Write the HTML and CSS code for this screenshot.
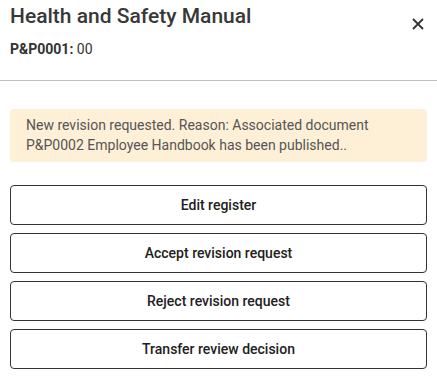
FILE: index.html
```html
<!DOCTYPE html>
<html lang="en">
<head>
<meta charset="utf-8">
<title>Health and Safety Manual</title>
<link rel="stylesheet" href="styles.css">
</head>
<body>
<div class="panel">
  <header class="header">
    <div class="titles">
      <h1 class="title">Health and Safety Manual</h1>
      <div class="subtitle"><strong>P&amp;P0001:</strong> 00</div>
    </div>
    <button class="close" aria-label="Close">
      <svg width="12" height="12" viewBox="0 0 12 12"><path d="M1 1L11 11M11 1L1 11" stroke="#333" stroke-width="1.8" fill="none"/></svg>
    </button>
  </header>
  <div class="content">
    <div class="alert">New revision requested. Reason: Associated document P&amp;P0002 Employee Handbook has been published..</div>
    <div class="actions">
      <button class="btn">Edit register</button>
      <button class="btn">Accept revision request</button>
      <button class="btn">Reject revision request</button>
      <button class="btn">Transfer review decision</button>
    </div>
  </div>
</div>
</body>
</html>
```
FILE: styles.css
```css
html, body {
  margin: 0;
  padding: 0;
  background: #fff;
}
body {
  font-family: Roboto, "Liberation Sans", sans-serif;
  color: #333;
}
.header {
  display: flex;
  justify-content: space-between;
  align-items: flex-start;
  padding: 4px 10px 0 10px;
  height: 76px;
  border-bottom: 1px solid #bdbdbd;
}
.title {
  margin: 0;
  font-size: 21px;
  line-height: 25px;
  font-weight: 500;
  color: #383838;
}
.subtitle {
  margin-top: 12px;
  font-size: 14px;
  line-height: 16px;
  color: #333;
}
.subtitle strong {
  font-weight: 700;
}
.close {
  margin-top: 14px;
  margin-right: 3px;
  padding: 0;
  border: 0;
  background: none;
  width: 12px;
  height: 12px;
  display: flex;
}
.content {
  padding: 28px 10px 0 10px;
}
.alert {
  background: #fdf0d6;
  border-radius: 4px;
  padding: 6px 16px 7px 16px;
  font-size: 14px;
  line-height: 20px;
  color: #555;
}
.actions {
  margin-top: 23px;
  display: flex;
  flex-direction: column;
  gap: 8px;
}
.btn {
  height: 40px;
  border: 1px solid #333;
  border-radius: 4px;
  background: #fff;
  font-family: Roboto, "Liberation Sans", sans-serif;
  font-size: 14px;
  font-weight: 500;
  color: #212121;
  padding: 0;
}
```
